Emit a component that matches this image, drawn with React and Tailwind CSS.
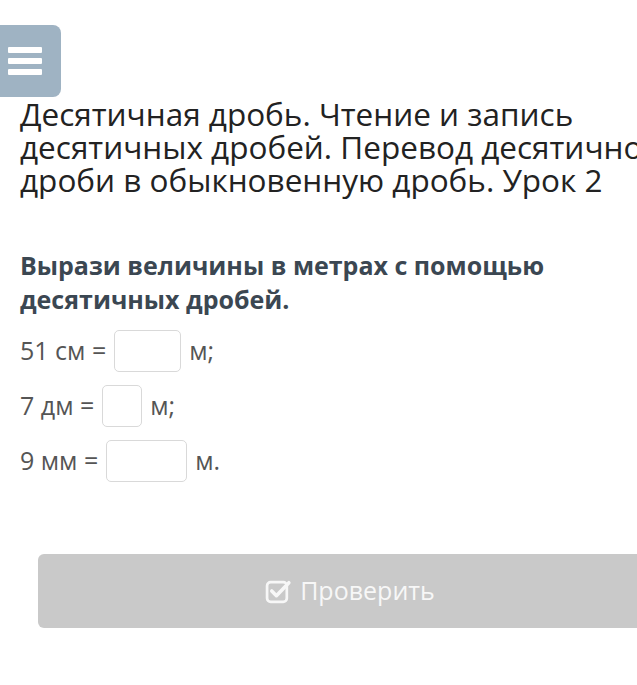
import React from 'react';

function CheckSquareIcon() {
  return (
    <svg width="27" height="25" viewBox="0 0 26 24" fill="none" className="shrink-0">
      <rect x="2" y="3" width="19" height="19" rx="3.5" stroke="currentColor" strokeWidth="2.6" />
      <path d="M6.5 11.5 L11 16 L23 3.5" stroke="currentColor" strokeWidth="3.4" strokeLinecap="round" strokeLinejoin="round" />
    </svg>
  );
}

function Row({ label, boxWidth, unit }) {
  return (
    <div className="flex items-center h-[42px] text-[25px] text-[#555]">
      <span className="whitespace-pre">{label}</span>
      <div className={`${boxWidth} h-[42px] ml-[8px] border border-[#d9d9d9] rounded-[5px] bg-white`} />
      <span className="ml-[8px]">{unit}</span>
    </div>
  );
}

export default function App() {
  return (
    <div className="w-full min-h-[685px] bg-white overflow-hidden font-['Open_Sans',sans-serif]">
      {/* menu toggle */}
      <div className="pt-[25px]">
        <div className="w-[61px] h-[72px] bg-[#9fb3c3] rounded-r-[8px] flex flex-col justify-center gap-[5px] pl-[8px]">
          <span className="block w-[34px] h-[6px] bg-white rounded-[1px]" />
          <span className="block w-[34px] h-[6px] bg-white rounded-[1px]" />
          <span className="block w-[34px] h-[6px] bg-white rounded-[1px]" />
        </div>
      </div>

      {/* lesson title */}
      <h1 className="w-[720px] pl-[20px] text-[31.5px] leading-[33px] text-[#222] font-normal">
        Десятичная дробь. Чтение и запись десятичных дробей. Перевод десятичной дроби в обыкновенную дробь. Урок 2
      </h1>

      {/* task */}
      <div className="pl-[20px] mt-[52px]">
        <p className="w-[600px] text-[25px] leading-[34px] font-bold text-[#3b4752]">
          Вырази величины в метрах с помощью десятичных дробей.
        </p>
        <div className="mt-[14px] flex flex-col gap-[13px]">
          <Row label="51 см =" boxWidth="w-[67px]" unit="м;" />
          <Row label="7 дм =" boxWidth="w-[40px]" unit="м;" />
          <Row label="9 мм =" boxWidth="w-[81px]" unit="м." />
        </div>
      </div>

      {/* submit */}
      <div className="pl-[38px] mt-[72px]">
        <button className="w-[624px] h-[74px] bg-[#c9c9c9] rounded-[6px] flex items-center justify-center gap-[8px] text-[25px] text-[#f7f7f7]">
          <CheckSquareIcon />
          <span>Проверить</span>
        </button>
      </div>
    </div>
  );
}
